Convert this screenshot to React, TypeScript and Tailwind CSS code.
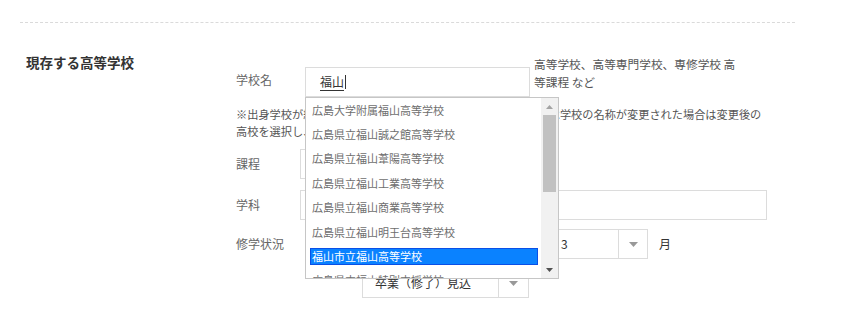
import React from "react";

const items = [
  "広島大学附属福山高等学校",
  "広島県立福山誠之館高等学校",
  "広島県立福山葦陽高等学校",
  "広島県立福山工業高等学校",
  "広島県立福山商業高等学校",
  "広島県立福山明王台高等学校",
  "福山市立福山高等学校",
  "広島県立福山特別支援学校",
];

function Arrow({ color = "#999" }: { color?: string }) {
  return (
    <svg width="9" height="5" viewBox="0 0 9 5">
      <path d="M0 0 L9 0 L4.5 5 Z" fill={color} />
    </svg>
  );
}

function Select({ text, className, arrowW }: { text: string; className: string; arrowW: string }) {
  return (
    <div className={`flex h-[30px] border border-[#dcdcdc] bg-white ${className}`}>
      <div className="flex-1 flex items-center pl-[12px] text-[12px] text-[#333]">{text}</div>
      <div className={`${arrowW} border-l border-[#dcdcdc] flex items-center justify-center`}>
        <Arrow />
      </div>
    </div>
  );
}

export default function App() {
  return (
    <div className="w-[842px] h-[325px] bg-white overflow-hidden font-['Noto_Sans_CJK_JP','Noto_Sans',sans-serif] text-[#666]">
      <div className="pt-[22px] pl-[20px]">
        <div className="w-[775px] border-t border-dashed border-[#dadada]" />
      </div>
      <div className="flex mt-[30px]">
        <div className="w-[236px] pl-[26px] text-[13.5px] leading-[18px] font-bold text-[#333]">
          現存する高等学校
        </div>
        <div className="relative flex flex-col text-[12px]">
          {/* Row 1 */}
          <div className="flex items-start">
            <div className="w-[69px] mt-[18px] leading-[18px]">学校名</div>
            <div className="mt-[14px] w-[225px] h-[30px] border border-[#dcdcdc] flex items-center pl-[14px] text-[12px] text-[#333]">
              <span className="underline underline-offset-[3px]">福山</span>
              <span className="w-px h-[14px] bg-[#333] ml-px" />
            </div>
            <div className="ml-[4px] mt-[2px] w-[208px] leading-[18px] text-[#555] text-[11.7px]">
              高等学校、高等専門学校、専修学校 高等課程 など
            </div>
          </div>
          {/* Row 2 */}
          <div className="mt-[9px] w-[560px] leading-[17px] text-[#555] text-[11.2px] whitespace-nowrap">
            ※出身学校が統廃合等により現在は存在していない場合、または学校の名称が変更された場合は変更後の
            <br />
            高校を選択し、旧校名を下欄に記入してください。
          </div>
          {/* Row 3 */}
          <div className="flex items-center mt-[9px]">
            <div className="w-[64px]">課程</div>
            <Select text="全日制" className="w-[228px]" arrowW="w-[30px]" />
          </div>
          {/* Row 4 */}
          <div className="flex items-center mt-[11px]">
            <div className="w-[64px]">学科</div>
            <div className="w-[467px] h-[30px] border border-[#dcdcdc]" />
          </div>
          {/* Row 5 */}
          <div className="flex items-center mt-[9px]">
            <div className="w-[126px]">修学状況</div>
            <Select text="2024" className="w-[150px]" arrowW="w-[30px]" />
            <div className="ml-[8px] w-[28px] text-[#333]">年</div>
            <Select text="3" className="w-[100px]" arrowW="w-[29px]" />
            <div className="ml-[11px] text-[#333] text-[12px]">月</div>
          </div>
          {/* Row 6 */}
          <div className="flex items-center mt-[9px]">
            <div className="w-[126px]" />
            <Select text="卒業（修了）見込" className="w-[167px]" arrowW="w-[30px]" />
          </div>

          {/* Autocomplete dropdown */}
          <div className="absolute left-[69px] top-[44px] w-[254px] h-[182px] border border-[#c6c6c6] bg-white flex overflow-hidden">
            <div className="flex-1 flex flex-col overflow-hidden">
              {items.map((t, i) => (
                <div key={t} className="h-[24.4px] shrink-0 flex items-center">
                  <div
                    className={
                      i === 6
                        ? "ml-[4px] mr-[3px] flex-1 h-[17px] flex items-center px-px border border-[#0a4fe6] bg-[#0a82ff] text-white text-[11px] leading-none whitespace-nowrap"
                        : "ml-[4px] mr-[3px] flex-1 h-[17px] flex items-center px-px border border-transparent text-[#6e6e6e] text-[11px] leading-none whitespace-nowrap"
                    }
                  >
                    {t}
                  </div>
                </div>
              ))}
            </div>
            <div className="w-[17px] bg-[#f1f1f1] flex flex-col">
              <div className="h-[17px] flex items-center justify-center">
                <svg width="7" height="4" viewBox="0 0 7 4">
                  <path d="M0 4 L7 4 L3.5 0 Z" fill="#a3a3a3" />
                </svg>
              </div>
              <div className="mx-[2px] h-[77px] bg-[#c1c1c1]" />
              <div className="flex-1" />
              <div className="h-[17px] flex items-center justify-center">
                <svg width="7" height="4" viewBox="0 0 7 4">
                  <path d="M0 0 L7 0 L3.5 4 Z" fill="#505050" />
                </svg>
              </div>
            </div>
          </div>
        </div>
      </div>
    </div>
  );
}
